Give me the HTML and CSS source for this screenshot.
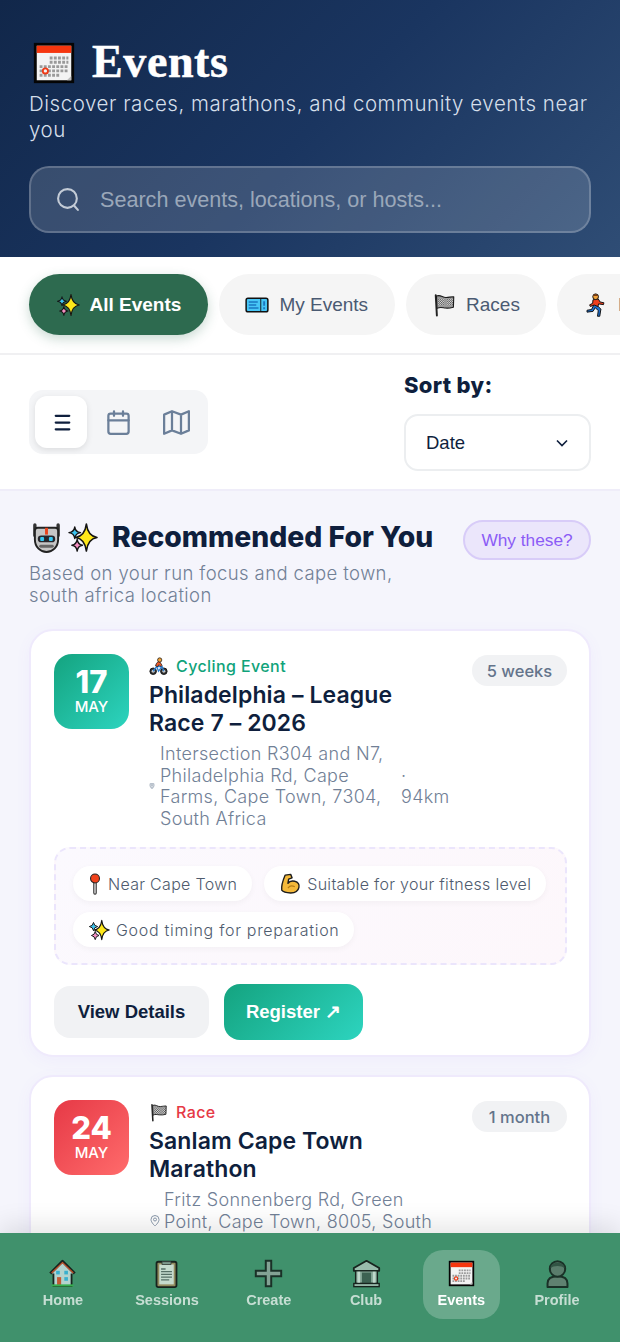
FILE: index.html
```html
<!DOCTYPE html>
<html lang="en">
<head>
    <meta charset="utf-8">
    <title>Events</title>
    <link rel="stylesheet" href="styles.css">
</head>
<body>

    <svg class="sprites" width="0" height="0">
        <defs>
            <pattern id="checker" width="3" height="3" patternUnits="userSpaceOnUse">
                <rect width="3" height="3" fill="#eee"/>
                <rect width="1.5" height="1.5" fill="#444"/>
                <rect x="1.5" y="1.5" width="1.5" height="1.5" fill="#444"/>
            </pattern>
            <symbol id="cal" viewBox="0 0 32 32">
                <rect x="2" y="2" width="28" height="28" fill="#050505"/>
                <rect x="4" y="4" width="24" height="24" fill="#f3f3f3"/>
                <rect x="4" y="4" width="24" height="5" fill="#f5360f"/>
                <path d="M13 12.500H26M13 15.500H26M6 18.500H26M6 21.500H26M6 24.500H20" stroke="#9a9a9a" stroke-width="2" stroke-dasharray="2 .9"/>
                <circle cx="10" cy="21.500" r="1.800" fill="#f3f3f3" stroke="#ee3a16" stroke-width="1.300"/>
                <path d="M28 28v-3l-3 3z" fill="#bbb"/>
            </symbol>
            <symbol id="sparkle" viewBox="0 0 32 32">
                <path d="M20 2Q21.500 14.500 31 16 21.500 17.500 20 30 18.500 17.500 9 16 18.500 14.500 20 2Z" fill="#ffe81a" stroke="#141414" stroke-width="1.600" stroke-linejoin="round"/>
                <path d="M8 5Q8.700 10.300 14 11 8.700 11.700 8 17 7.300 11.700 2 11 7.300 10.300 8 5Z" fill="#3cc4f0" stroke="#141414" stroke-width="1.400" stroke-linejoin="round"/>
                <path d="M10.500 18Q11.200 23.300 16 24 11.200 24.700 10.500 30 9.800 24.700 5 24 9.800 23.300 10.500 18Z" fill="#f58fc2" stroke="#141414" stroke-width="1.400" stroke-linejoin="round"/>
            </symbol>
            <symbol id="ticket" viewBox="0 0 32 32">
                <rect x="1.500" y="7" width="29" height="18" rx="2.500" fill="#47c6f6" stroke="#111" stroke-width="2"/>
                <path d="M5 12h12M5 16h10M5 20h13" stroke="#1b78c2" stroke-width="2"/>
                <path d="M21 8v16" stroke="#111" stroke-width="1.200"/>
                <path d="M25.500 11v6M25.500 19v2.500" stroke="#1b78c2" stroke-width="2.500"/>
            </symbol>
            <symbol id="flag" viewBox="0 0 32 32">
                <path d="M5 3l1.500 27" stroke="#222" stroke-width="2.600" stroke-linecap="round"/>
                <path d="M6 4c6-2 8 2.500 13 2s6-1 10-1l-.5 14c-4 1-7 1.500-11 1s-7-1.500-10.800.5z" fill="url(#checker)" stroke="#1a1a1a" stroke-width="1.500" stroke-linejoin="round"/>
            </symbol>
            <symbol id="runner" viewBox="0 0 32 32">
                <path d="M14 14l-4 8-6 1 0 2.500 8-1 3-5 4 4-1 7.500h3l1.500-9.500-5-5z" fill="#1d6fd0" stroke="#111" stroke-width="1.300" stroke-linejoin="round"/>
                <path d="M12 9l7-1 2.500 4 5 1-.5 2.500-6.500-1-1 3.500-5-2-5 2-1-2.200 4-2z" fill="#ef3f1e" stroke="#111" stroke-width="1.300" stroke-linejoin="round"/>
                <circle cx="15.500" cy="5" r="3.800" fill="#f2a33a" stroke="#111" stroke-width="1.300"/>
                <path d="M12 4c1-3 6-3 7 0z" fill="#7a3b12"/>
            </symbol>
            <symbol id="robot" viewBox="0 0 32 32">
                <path d="M4 3v11M28 3v11" stroke="#333" stroke-width="3.500" stroke-linecap="round"/>
                <path d="M7 6h18c2 0 3 1 3 3v9c0 8-6 13-12 13S4 26 4 18V9c0-2 1-3 3-3z" fill="#c6c6c6" stroke="#222" stroke-width="2"/>
                <rect x="14.500" y="6" width="3" height="7" fill="#e8431d"/>
                <rect x="7" y="14" width="18" height="7" rx="3.500" fill="#26262c"/>
                <rect x="9.500" y="15.500" width="4" height="4" rx="1" fill="#35c8f2"/>
                <rect x="18.500" y="15.500" width="4" height="4" rx="1" fill="#35c8f2"/>
                <path d="M10 25h12" stroke="#666" stroke-width="3" stroke-linecap="round"/>
            </symbol>
            <symbol id="cyclist" viewBox="0 0 32 32">
                <circle cx="7" cy="24" r="5.500" fill="#333" stroke="#111" stroke-width="1.500"/>
                <circle cx="25" cy="24" r="5.500" fill="#333" stroke="#111" stroke-width="1.500"/>
                <circle cx="7" cy="24" r="2.500" fill="#ccc"/>
                <circle cx="25" cy="24" r="2.500" fill="#ccc"/>
                <path d="M7 24l6-8h9l3 8M13 16l3 8 6-8" stroke="#2d7fd0" stroke-width="2.200" fill="none"/>
                <path d="M11 15c1-5 4-8 7-7l4 6-2 2-3-3-2 3z" fill="#ef5a2a" stroke="#111" stroke-width="1.200"/>
                <circle cx="18" cy="5" r="3.600" fill="#f2a33a" stroke="#111" stroke-width="1.200"/>
            </symbol>
            <symbol id="pin" viewBox="0 0 32 32">
                <path d="M16 12v17" stroke="#222" stroke-width="5" stroke-linecap="round"/>
                <path d="M16 12v17" stroke="#c9c9c9" stroke-width="2.400" stroke-linecap="round"/>
                <circle cx="16" cy="8" r="6.500" fill="#f0421b" stroke="#222" stroke-width="1.500"/>
            </symbol>
            <symbol id="muscle" viewBox="0 0 32 32">
                <path d="M9 3l8-1 2 5-5 2-1 6c2-3 6-4 10-3 5 1 7 5 6 9-1 5-6 8-12 8-5 0-11-1-13-4-1-8 2-15 5-22z" fill="#f4b93a" stroke="#1c1c1c" stroke-width="2" stroke-linejoin="round"/>
                <path d="M13 22c2-3 6-4 10-2" stroke="#b87d14" stroke-width="1.600" fill="none"/>
            </symbol>
            <symbol id="house" viewBox="0 0 32 32">
                <path d="M6 14v16h20V14" fill="#c8dfe0" stroke="#111" stroke-width="2"/>
                <path d="M2.500 16L16 2.500 29.500 16" fill="#c8dfe0" stroke="#111" stroke-width="3" stroke-linejoin="round"/>
                <path d="M4 15.500L16 4l12 11.500" fill="none" stroke="#dd4a20" stroke-width="1.300"/>
                <rect x="9" y="13" width="4" height="4" fill="#38b6e0"/>
                <rect x="18" y="13" width="4" height="4" fill="#38b6e0"/>
                <rect x="18" y="20" width="4" height="4" fill="#38b6e0"/>
                <rect x="10" y="20" width="4.500" height="9" fill="#d8502a"/>
                <rect x="4" y="28" width="24" height="2.400" fill="#36b54a"/>
            </symbol>
            <symbol id="clipboard" viewBox="0 0 32 32">
                <rect x="5" y="3" width="22" height="28" rx="2" fill="#a08a5c" stroke="#111" stroke-width="2"/>
                <rect x="8" y="6" width="16" height="22" fill="#dde8e0"/>
                <path d="M11 3h10v3H11z" fill="#8fa39a" stroke="#333"/>
                <path d="M10 11h5M10 14h12M10 17h12M10 20h12M10 23h9" stroke="#5a6a66" stroke-width="1.500"/>
            </symbol>
            <symbol id="plus" viewBox="0 0 32 32">
                <path d="M13 2h6v11h11v6H19v11h-6V19H2v-6h11z" fill="#8fa69c" stroke="#14211c" stroke-width="2.200"/>
            </symbol>
            <symbol id="bank" viewBox="0 0 32 32">
                <path d="M16 2L30 10v3H2v-3z" fill="#a9c4b8" stroke="#111" stroke-width="2" stroke-linejoin="round"/>
                <rect x="4" y="13" width="24" height="14" fill="#8ea99c" stroke="#111" stroke-width="1.500"/>
                <rect x="11" y="15" width="10" height="12" fill="#3c5a4e"/>
                <path d="M7.500 14v13M24.500 14v13" stroke="#d5e5dc" stroke-width="3"/>
                <rect x="2" y="27" width="28" height="3.500" fill="#a9c4b8" stroke="#111" stroke-width="1.500"/>
            </symbol>
            <symbol id="person" viewBox="0 0 32 32">
                <path d="M5 31v-4c0-5 4-8 11-8s11 3 11 8v4z" fill="#657f71" stroke="#14211c" stroke-width="2.200" stroke-linejoin="round"/>
                <circle cx="16" cy="11" r="8.500" fill="#5f7a6c" stroke="#14211c" stroke-width="2.200"/>
                <path d="M8 10c1-8 15-8 16 0-4-3-12-3-16 0z" fill="#2f4a3e"/>
            </symbol>
        </defs>
    </svg>

    <div class="app">

        <header class="hero">
            <div class="heroTitle">
                <svg class="emoji emojiTitle"><use href="#cal"/></svg>
                <h1>Events</h1>
            </div>
            <p class="heroSub">Discover races, marathons, and community events near you</p>
            <div class="search">
                <svg class="searchIcon" viewBox="0 0 24 24"><circle cx="11" cy="11" r="9"/><path d="M21 22l-3.500-4"/></svg>
                <span>Search events, locations, or hosts...</span>
            </div>
        </header>

        <nav class="tabs">
            <div class="tab tabActive"><svg class="emoji"><use href="#sparkle"/></svg>All Events</div>
            <div class="tab"><svg class="emoji"><use href="#ticket"/></svg>My Events</div>
            <div class="tab"><svg class="emoji"><use href="#flag"/></svg>Races</div>
            <div class="tab"><svg class="emoji"><use href="#runner"/></svg>Marathons</div>
        </nav>

        <div class="controls">
            <div class="viewToggle">
                <div class="viewBtn viewBtnActive">
                    <svg viewBox="0 0 24 24"><path d="M6 6h12M6 12h12M6 18h12"/></svg>
                </div>
                <div class="viewBtn">
                    <svg viewBox="0 0 24 24"><rect x="3" y="4" width="18" height="18" rx="2"/><path d="M8 2v4M16 2v4M3 10h18"/></svg>
                </div>
                <div class="viewBtn">
                    <svg viewBox="0 0 24 24"><path d="M1 5l7-3 8 3 7-3v17l-7 3-8-3-7 3zM8 2v17M16 5v17"/></svg>
                </div>
            </div>
            <div class="sortBox">
                <label>Sort by:</label>
                <div class="select">
                    Date
                    <svg viewBox="0 0 24 24"><path d="M6 9l6 6 6-6"/></svg>
                </div>
            </div>
        </div>

        <main class="recommended">
            <div class="recHead">
                <div class="recText">
                    <h2>
                        <svg class="emoji emojiHead"><use href="#robot"/></svg>
                        <svg class="emoji emojiHead"><use href="#sparkle"/></svg>
                        <span>Recommended For You</span>
                    </h2>
                    <p>Based on your run focus and cape town, south africa location</p>
                </div>
                <div class="whyBtn">Why these?</div>
            </div>

            <article class="card">
                <div class="cardTop">
                    <div class="dateBadge dateGreen">
                        <b>17</b>
                        <span>MAY</span>
                    </div>
                    <div class="cardInfo">
                        <div class="eventType typeGreen"><svg class="emoji emojiSmall"><use href="#cyclist"/></svg>Cycling Event</div>
                        <h3>Philadelphia – League Race 7 – 2026</h3>
                        <div class="location">
                            <svg class="pinIcon pinFaint" viewBox="0 0 24 24"><path d="M12 22s8-7 8-13a8 8 0 0 0-16 0c0 6 8 13 8 13z"/><circle cx="12" cy="9" r="3"/></svg>
                            <span class="address">Intersection R304 and N7, Philadelphia Rd, Cape Farms, Cape Town, 7304, South Africa</span>
                            <span class="distance">· 94km</span>
                        </div>
                    </div>
                    <div class="timeLeft">5 weeks</div>
                </div>

                <div class="whyBox">
                    <div class="chip"><svg class="emoji emojiChip emojiPin"><use href="#pin"/></svg>Near Cape Town</div>
                    <div class="chip"><svg class="emoji emojiChip"><use href="#muscle"/></svg>Suitable for your fitness level</div>
                    <div class="chip chipWide"><svg class="emoji emojiChip"><use href="#sparkle"/></svg>Good timing for preparation</div>
                </div>

                <div class="cardActions">
                    <div class="btnDetails">View Details</div>
                    <div class="btnRegister">Register ↗</div>
                </div>
            </article>

            <article class="card">
                <div class="cardTop">
                    <div class="dateBadge dateRed">
                        <b>24</b>
                        <span>MAY</span>
                    </div>
                    <div class="cardInfo">
                        <div class="eventType typeRed"><svg class="emoji emojiSmall"><use href="#flag"/></svg>Race</div>
                        <h3>Sanlam Cape Town Marathon</h3>
                        <div class="location">
                            <svg class="pinIcon" viewBox="0 0 24 24"><path d="M12 22s8-7 8-13a8 8 0 0 0-16 0c0 6 8 13 8 13z"/><circle cx="12" cy="9" r="3"/></svg>
                            <span class="address addressWide">Fritz Sonnenberg Rd, Green Point, Cape Town, 8005, South Africa</span>
                        </div>
                    </div>
                    <div class="timeLeft">1 month</div>
                </div>
            </article>
        </main>

        <footer class="bottomNav">
            <div class="navItem"><svg><use href="#house"/></svg>Home</div>
            <div class="navItem"><svg><use href="#clipboard"/></svg>Sessions</div>
            <div class="navItem"><svg><use href="#plus"/></svg>Create</div>
            <div class="navItem"><svg><use href="#bank"/></svg>Club</div>
            <div class="navItem navActive"><svg><use href="#cal"/></svg>Events</div>
            <div class="navItem"><svg><use href="#person"/></svg>Profile</div>
        </footer>

    </div>

</body>
</html>
```

FILE: styles.css
```css
* {
    margin: 0;
    padding: 0;
    box-sizing: border-box;
}

html, body {
    height: 100%;
    overflow: hidden;
}

body {
    font-family: 'Inter', sans-serif;
    background: #f5f5fc;
    color: #0f1f3d;
}

.sprites {
    position: absolute;
}

.app {
    height: 100vh;
    overflow: hidden;
}

.emoji {
    width: 24px;
    height: 24px;
    flex-shrink: 0;
}

/* header */
.hero {
    height: 257px;
    padding: 40px 29px 0 29px;
    background: linear-gradient(135deg, #11274a 0%, #1a3560 50%, #2f4d75 100%);
    color: white;
}

.heroTitle {
    display: flex;
    align-items: center;
    gap: 15px;
    height: 46px;
    padding-left: 2px;
}

.emojiTitle {
    width: 46px;
    height: 46px;
}

.hero h1 {
    margin-top: -3px;
    font-family: 'Liberation Serif', serif;
    font-size: 46px;
    font-weight: 700;
    line-height: 46px;
    letter-spacing: 0.6px;
    -webkit-text-stroke: 0.5px white;
}

.heroSub {
    margin-top: 5px;
    font-size: 20.500px;
    font-weight: 300;
    line-height: 26px;
    letter-spacing: 0.54px;
    color: #d5dfea;
}

.search {
    display: flex;
    align-items: center;
    gap: 19px;
    height: 67px;
    margin-top: 23px;
    padding-left: 25px;
    border: 2px solid rgba(255, 255, 255, 0.2);
    border-radius: 20px;
    background: rgba(255, 255, 255, 0.15);
    font-family: 'Liberation Sans', sans-serif;
    font-size: 21.600px;
    color: #9aa7b9;
}

.searchIcon {
    width: 25px;
    height: 25px;
    fill: none;
    stroke: #c3cbd6;
    stroke-width: 2;
    stroke-linecap: round;
}

/* tabs */
.tabs {
    display: flex;
    gap: 11px;
    height: 98px;
    padding: 17px 0 0 29px;
    background: white;
    border-bottom: 2px solid #f0f0f2;
    overflow: hidden;
}

.tab {
    display: flex;
    align-items: center;
    justify-content: center;
    flex-shrink: 0;
    gap: 10px;
    height: 61px;
    padding: 0 26.500px;
    border-radius: 31px;
    background: #f5f5f5;
    font-family: 'Liberation Sans', sans-serif;
    font-size: 19px;
    color: #4a5a72;
}

.tabActive {
    background: #2d6a4f;
    color: white;
    font-weight: 700;
    box-shadow: 0 4px 12px rgba(45, 106, 79, 0.25);
}

/* view toggle and sort */
.controls {
    display: flex;
    justify-content: space-between;
    align-items: center;
    height: 136px;
    padding: 0 29px;
    background: white;
    border-bottom: 2px solid #efedf9;
}

.viewToggle {
    display: flex;
    align-items: center;
    gap: 6px;
    width: 179px;
    height: 64px;
    padding: 6px;
    margin-top: -1px;
    border-radius: 14px;
    background: #f4f5f7;
}

.viewBtn {
    display: flex;
    align-items: center;
    justify-content: center;
    width: 52px;
    height: 52px;
    border-radius: 12px;
}

.viewBtn svg {
    width: 27px;
    height: 27px;
    margin-top: 2px;
    fill: none;
    stroke: #6b7f99;
    stroke-width: 2;
    stroke-linejoin: round;
    stroke-linecap: round;
}

.viewBtnActive {
    background: white;
    box-shadow: 0 2px 6px rgba(0, 0, 0, 0.1);
}

.viewBtn.viewBtnActive svg {
    margin-left: 4px;
    stroke: #0f1f3d;
}

.sortBox {
    width: 187px;
}

.sortBox label {
    display: block;
    font-size: 22px;
    font-weight: 800;
    line-height: 24px;
    letter-spacing: 0.3px;
}

.select {
    display: flex;
    align-items: center;
    justify-content: space-between;
    height: 57px;
    margin-top: 17px;
    padding: 0 17px 0 20px;
    border: 2px solid #eceef0;
    border-radius: 14px;
    background: white;
    font-family: 'Liberation Sans', sans-serif;
    font-size: 18.500px;
}

.select svg {
    width: 20px;
    height: 20px;
    fill: none;
    stroke: #0f1f3d;
    stroke-width: 2;
}

/* recommended */
.recommended {
    padding: 28px 29px 0 29px;
}

.recHead {
    display: flex;
    justify-content: space-between;
    align-items: flex-start;
}

.recText {
    width: 420px;
}

.recText h2 {
    display: flex;
    align-items: center;
    gap: 5px;
    height: 36px;
    padding-left: 2px;
    font-size: 28.300px;
    font-weight: 800;
    white-space: nowrap;
}

.recText h2 span {
    margin-left: 9px;
}

.emojiHead {
    width: 31px;
    height: 31px;
}

.recText p {
    max-width: 395px;
    margin-top: 7px;
    font-size: 18.500px;
    font-weight: 300;
    line-height: 22px;
    letter-spacing: 0.4px;
    color: #718096;
}

.whyBtn {
    display: flex;
    align-items: center;
    justify-content: center;
    width: 128px;
    height: 40px;
    margin-top: 1px;
    border: 2px solid #d8ccf8;
    border-radius: 20px;
    background: #ebe6fb;
    font-family: 'Liberation Sans', sans-serif;
    font-size: 17.300px;
    color: #8b5cf6;
}

.card {
    margin-top: 23px;
    padding: 23px 22px 15px 23px;
    border: 2px solid #efeafc;
    border-radius: 24px;
    background: white;
    box-shadow: 0 4px 16px rgba(139, 92, 246, 0.05);
}

.card + .card {
    margin-top: 18px;
}

.cardTop {
    display: flex;
    align-items: flex-start;
}

.dateBadge {
    display: flex;
    flex-direction: column;
    align-items: center;
    flex-shrink: 0;
    width: 75px;
    height: 75px;
    padding-top: 12px;
    margin-right: 20px;
    border-radius: 18px;
    color: white;
}

.dateBadge b {
    font-size: 31px;
    font-weight: 800;
    line-height: 32px;
}

.dateBadge span {
    font-size: 15px;
    font-weight: 500;
    line-height: 18px;
}

.dateGreen {
    background: linear-gradient(135deg, #14a37f, #2dd4bf);
}

.dateRed {
    background: linear-gradient(135deg, #e63946, #ff6b6b);
}

.cardInfo {
    width: 304px;
}

.eventType {
    display: flex;
    align-items: center;
    gap: 8px;
    height: 24px;
    font-size: 16px;
    font-weight: 500;
    letter-spacing: 0.4px;
}

.emojiSmall {
    width: 19px;
    height: 19px;
}

.typeGreen {
    color: #10a37a;
}

.typeRed {
    color: #e63946;
}

.cardInfo h3 {
    width: 270px;
    margin-top: 3px;
    font-size: 23px;
    font-weight: 600;
    line-height: 28px;
    letter-spacing: 0.1px;
}

.location {
    display: flex;
    align-items: center;
    margin-top: 6px;
    font-size: 18px;
    font-weight: 300;
    line-height: 21.500px;
    letter-spacing: 0.3px;
    color: #718096;
}

.pinIcon {
    width: 12px;
    height: 12px;
    flex-shrink: 0;
    margin-right: 3px;
    fill: none;
    stroke: #8a99ab;
    stroke-width: 2;
}

.pinFaint {
    width: 6px;
    height: 6px;
    margin-right: 5px;
    stroke-width: 5;
    opacity: 0.6;
}

.address {
    flex: 1;
}

.addressWide {
    max-width: 272px;
}

.distance {
    width: 52px;
}

.timeLeft {
    display: flex;
    align-items: center;
    justify-content: center;
    flex-shrink: 0;
    width: 95px;
    height: 31px;
    margin-left: auto;
    margin-top: 1px;
    border-radius: 16px;
    background: #f1f2f4;
    font-size: 16.500px;
    font-weight: 500;
    color: #64748b;
}

.whyBox {
    display: flex;
    flex-wrap: wrap;
    gap: 11px 12px;
    margin-top: 18px;
    padding: 17px 17px 16px 17px;
    border: 2px dashed #ebe5fc;
    border-radius: 16px;
    background: linear-gradient(135deg, #fbf9fe, #fdf7fb);
}

.chip {
    display: flex;
    align-items: center;
    gap: 6px;
    height: 35px;
    padding: 0 15px;
    border-radius: 18px;
    background: white;
    box-shadow: 0 2px 6px rgba(0, 0, 0, 0.04);
    font-size: 16px;
    font-weight: 300;
    letter-spacing: 0.3px;
    color: #4f5b6e;
}

.chipWide {
    letter-spacing: 0.7px;
}

.emojiChip {
    width: 22px;
    height: 22px;
}

.emojiPin {
    margin: 0 -4px;
}

.cardActions {
    display: flex;
    align-items: center;
    gap: 15px;
    margin-top: 19px;
    font-family: 'Liberation Sans', sans-serif;
    font-size: 18.500px;
    font-weight: 700;
}

.btnDetails {
    display: flex;
    align-items: center;
    justify-content: center;
    width: 155px;
    height: 52px;
    border-radius: 16px;
    background: #f1f2f4;
}

.btnRegister {
    display: flex;
    align-items: center;
    justify-content: center;
    width: 139px;
    height: 56px;
    border-radius: 16px;
    background: linear-gradient(135deg, #14a37f, #2dd4bf);
    color: white;
}

/* bottom nav */
.bottomNav {
    position: fixed;
    left: 0;
    right: 0;
    bottom: 0;
    display: grid;
    grid-template-columns: 104px 104px 99.500px 95px 95.500px 96px;
    justify-items: center;
    align-items: start;
    height: 109px;
    padding: 17px 0 0 11px;
    background: #40916c;
    box-shadow: 0 -8px 24px rgba(0, 0, 0, 0.1);
}

.navItem {
    display: flex;
    flex-direction: column;
    align-items: center;
    gap: 4px;
    height: 69px;
    padding: 9px 14.500px 0 14.500px;
    border-radius: 20px;
    font-family: 'Liberation Sans', sans-serif;
    font-size: 14.500px;
    font-weight: 700;
    color: rgba(255, 255, 255, 0.7);
}

.navItem svg {
    width: 29px;
    height: 29px;
    opacity: 0.85;
}

.navActive {
    background: rgba(255, 255, 255, 0.22);
    color: white;
}

.navActive svg {
    opacity: 1;
}
```
